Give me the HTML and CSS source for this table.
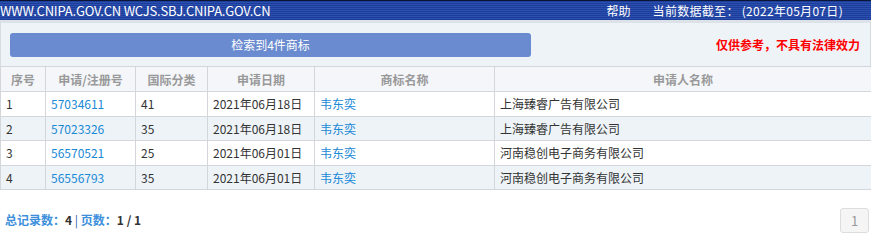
FILE: index.html
```html
<!DOCTYPE html>
<html lang="zh-CN">
<head>
<meta charset="utf-8">
<title>商标检索</title>
<link rel="stylesheet" href="styles.css">
</head>
<body>
<div class="topbar">
  <span class="site">WWW.CNIPA.GOV.CN WCJS.SBJ.CNIPA.GOV.CN</span>
  <span class="top-right"><span class="help">帮助</span><span class="date">当前数据截至： (2022年05月07日)</span></span>
</div>
<div class="toolbar">
  <div class="result-btn">检索到4件商标</div>
  <div class="notice">仅供参考，不具有法律效力</div>
</div>
<table class="grid">
  <colgroup>
    <col class="c1"><col class="c2"><col class="c3"><col class="c4"><col class="c5"><col class="c6">
  </colgroup>
  <thead>
    <tr><th>序号</th><th>申请/注册号</th><th>国际分类</th><th>申请日期</th><th>商标名称</th><th>申请人名称</th></tr>
  </thead>
  <tbody>
    <tr><td>1</td><td><a class="lnk">57034611</a></td><td>41</td><td>2021年06月18日</td><td><a class="lnk">韦东奕</a></td><td>上海臻睿广告有限公司</td></tr>
    <tr class="alt"><td>2</td><td><a class="lnk">57023326</a></td><td>35</td><td>2021年06月18日</td><td><a class="lnk">韦东奕</a></td><td>上海臻睿广告有限公司</td></tr>
    <tr><td>3</td><td><a class="lnk">56570521</a></td><td>25</td><td>2021年06月01日</td><td><a class="lnk">韦东奕</a></td><td>河南稳创电子商务有限公司</td></tr>
    <tr class="alt"><td>4</td><td><a class="lnk">56556793</a></td><td>35</td><td>2021年06月01日</td><td><a class="lnk">韦东奕</a></td><td>河南稳创电子商务有限公司</td></tr>
  </tbody>
</table>
<div class="footer">
  <div class="summary"><span class="lbl">总记录数：</span><span class="val">4</span> <span class="sep">|</span> <span class="lbl">页数：</span><span class="val">1 / 1</span></div>
  <div class="pager"><span class="page">1</span></div>
</div>
</body>
</html>
```
FILE: styles.css
```css
html, body {
  margin: 0;
  padding: 0;
  background: #ffffff;
}
body {
  width: 871px;
  font-family: "Noto Sans CJK SC", "Noto Sans", sans-serif;
  font-size: 12px;
  color: #333333;
}
.topbar {
  height: 19px;
  border-top: 1px solid #0b1636;
  background: repeating-linear-gradient(to bottom, #1d3d9c 0, #1d3d9c 1px, #2c50ae 1px, #2c50ae 2px);
  color: #ffffff;
  display: flex;
  justify-content: space-between;
  align-items: center;
  line-height: 19px;
  font-size: 13px;
}
.site {
  letter-spacing: -0.2px;
}
.top-right {
  display: flex;
  gap: 22px;
  padding-right: 28px;
  font-size: 12px;
}
.date {
  letter-spacing: 0.3px;
}
.toolbar {
  height: 43px;
  border-top: 3px solid #dde2e8;
  border-left: 1px solid #d6dbe2;
  border-right: 1px solid #d6dbe2;
  background: #eef3f8;
  display: flex;
  align-items: center;
  justify-content: space-between;
  padding: 0 10px 0 9px;
}
.result-btn {
  width: 521px;
  height: 24px;
  line-height: 24px;
  border-radius: 3px;
  background: #6a8bcf;
  color: #ffffff;
  text-align: center;
}
.notice {
  color: #ff0000;
  font-weight: bold;
}
.grid {
  width: 871px;
  border-collapse: collapse;
  table-layout: fixed;
}
.c1 { width: 45px; }
.c2 { width: 90px; }
.c3 { width: 72px; }
.c4 { width: 107px; }
.c5 { width: 180px; }
.c6 { width: 377px; }
.grid th, .grid td {
  border: 1px solid #d3d6da;
  height: 24.5px;
  padding: 0 5px;
  box-sizing: border-box;
  white-space: nowrap;
}
.grid th {
  background: #f4f6f9;
  color: #999999;
  font-weight: bold;
  text-align: center;
  height: 25px;
}
.grid td {
  text-align: left;
  background: #ffffff;
}
.grid tr.alt td {
  background: #eef3f8;
}
.lnk {
  color: #1a8ad6;
  text-decoration: none;
}
.footer {
  display: flex;
  justify-content: space-between;
  align-items: center;
  padding: 18px 2px 0 5px;
}
.summary {
  font-weight: bold;
  margin-top: -3px;
}
.lbl { color: #3d8fdc; }
.val { color: #333333; }
.sep { color: #2f5f9e; font-weight: normal; }
.page {
  display: block;
  width: 27px;
  height: 23px;
  line-height: 23px;
  text-align: center;
  border: 1px solid #dddddd;
  border-radius: 3px;
  background: #f5f5f5;
  color: #999999;
  font-size: 13px;
}
```
